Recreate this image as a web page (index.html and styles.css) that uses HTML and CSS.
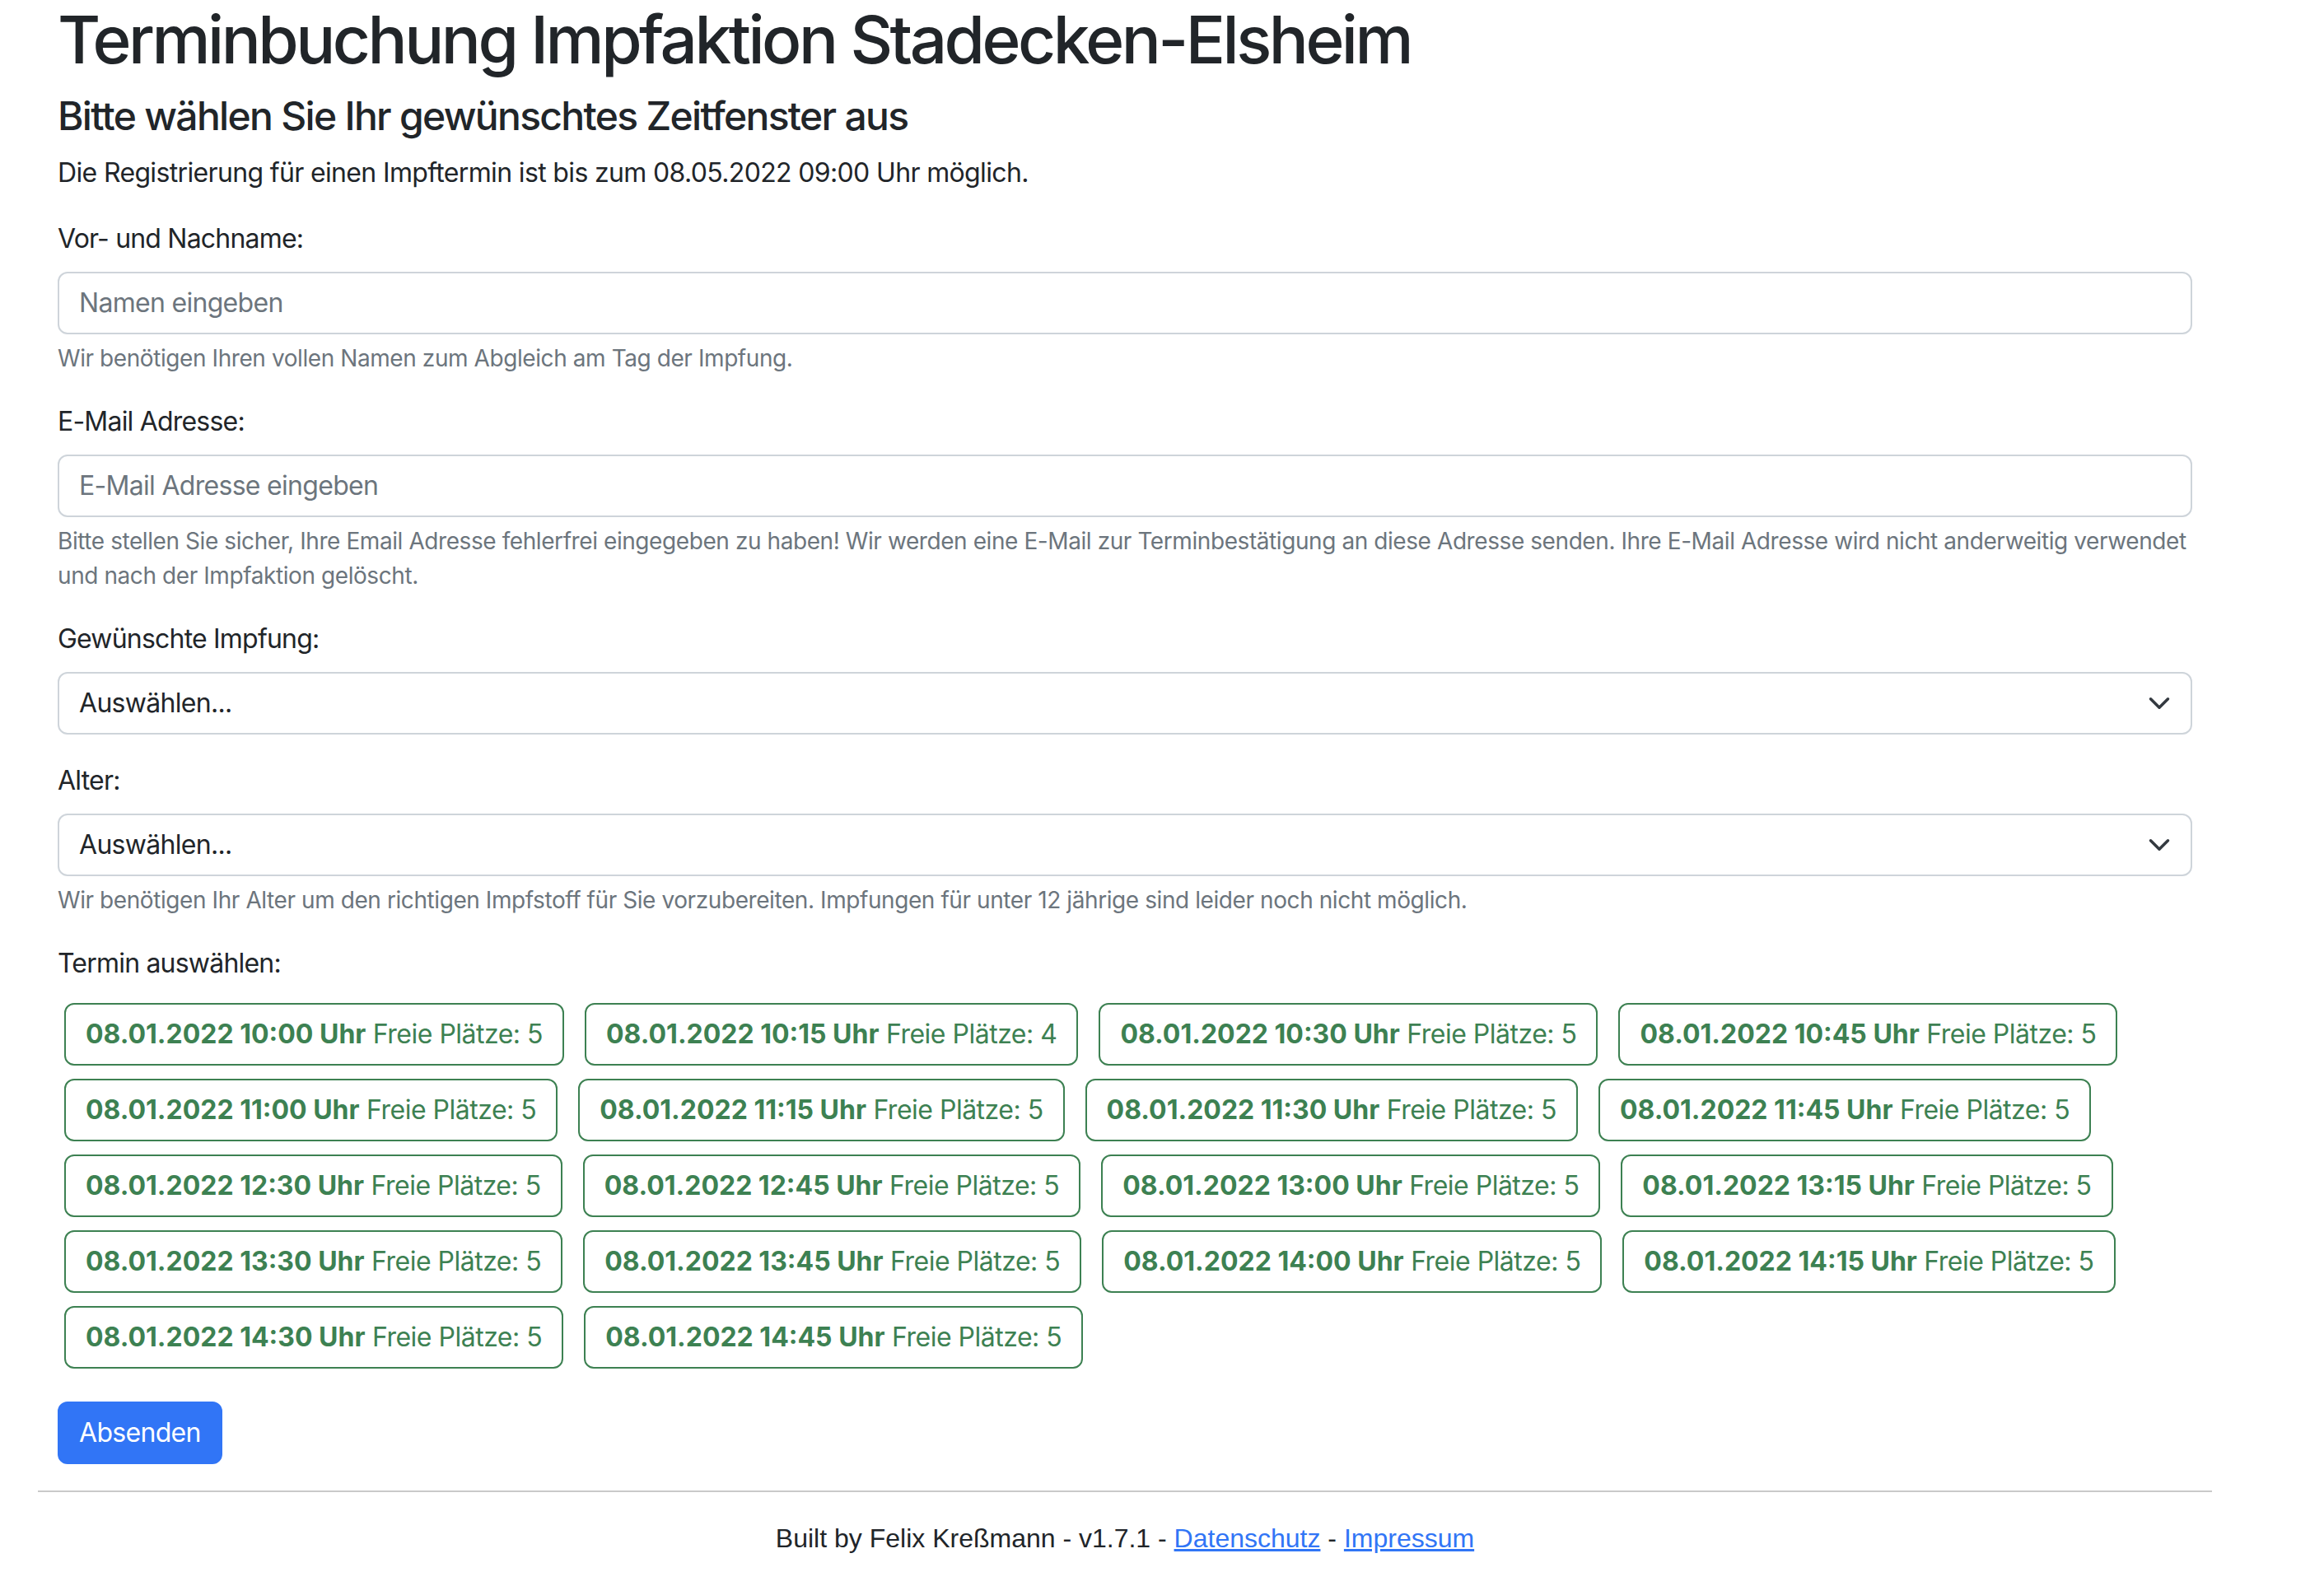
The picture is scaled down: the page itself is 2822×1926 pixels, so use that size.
FILE: index.html
```html
<!DOCTYPE html>
<html lang="de">
<head>
<meta charset="utf-8">
<title>Terminbuchung Impfaktion Stadecken-Elsheim</title>
<link rel="stylesheet" href="styles.css">
</head>
<body>
<div class="container">
  <form class="content">
    <h1 class="title">Terminbuchung Impfaktion Stadecken-Elsheim</h1>
    <h4 class="subtitle">Bitte wählen Sie Ihr gewünschtes Zeitfenster aus</h4>
    <p class="lead-text">Die Registrierung für einen Impftermin ist bis zum 08.05.2022 09:00 Uhr möglich.</p>

    <div class="field">
      <label class="form-label">Vor- und Nachname:</label>
      <input class="form-control" type="text" placeholder="Namen eingeben">
      <div class="form-text">Wir benötigen Ihren vollen Namen zum Abgleich am Tag der Impfung.</div>
    </div>

    <div class="field">
      <label class="form-label">E-Mail Adresse:</label>
      <input class="form-control" type="email" placeholder="E-Mail Adresse eingeben">
      <div class="form-text">Bitte stellen Sie sicher, Ihre Email Adresse fehlerfrei eingegeben zu haben! Wir werden eine E-Mail zur Terminbestätigung an diese Adresse senden. Ihre E-Mail Adresse wird nicht anderweitig verwendet und nach der Impfaktion gelöscht.</div>
    </div>

    <div class="field">
      <label class="form-label">Gewünschte Impfung:</label>
      <div class="form-select"><span>Auswählen...</span><svg class="chev" viewBox="0 0 16 16" width="28" height="28"><path d="m2 5 6 6 6-6" fill="none" stroke="#343a40" stroke-width="2" stroke-linecap="round" stroke-linejoin="round"/></svg></div>
    </div>

    <div class="field">
      <label class="form-label">Alter:</label>
      <div class="form-select"><span>Auswählen...</span><svg class="chev" viewBox="0 0 16 16" width="28" height="28"><path d="m2 5 6 6 6-6" fill="none" stroke="#343a40" stroke-width="2" stroke-linecap="round" stroke-linejoin="round"/></svg></div>
      <div class="form-text">Wir benötigen Ihr Alter um den richtigen Impfstoff für Sie vorzubereiten. Impfungen für unter 12 jährige sind leider noch nicht möglich.</div>
    </div>

    <label class="form-label">Termin auswählen:</label>
    <div class="slots">
      <button type="button" class="slot"><b>08.01.2022 10:00 Uhr</b> Freie Plätze: 5</button>
      <button type="button" class="slot"><b>08.01.2022 10:15 Uhr</b> Freie Plätze: 4</button>
      <button type="button" class="slot"><b>08.01.2022 10:30 Uhr</b> Freie Plätze: 5</button>
      <button type="button" class="slot"><b>08.01.2022 10:45 Uhr</b> Freie Plätze: 5</button>
      <button type="button" class="slot"><b>08.01.2022 11:00 Uhr</b> Freie Plätze: 5</button>
      <button type="button" class="slot"><b>08.01.2022 11:15 Uhr</b> Freie Plätze: 5</button>
      <button type="button" class="slot"><b>08.01.2022 11:30 Uhr</b> Freie Plätze: 5</button>
      <button type="button" class="slot"><b>08.01.2022 11:45 Uhr</b> Freie Plätze: 5</button>
      <button type="button" class="slot"><b>08.01.2022 12:30 Uhr</b> Freie Plätze: 5</button>
      <button type="button" class="slot"><b>08.01.2022 12:45 Uhr</b> Freie Plätze: 5</button>
      <button type="button" class="slot"><b>08.01.2022 13:00 Uhr</b> Freie Plätze: 5</button>
      <button type="button" class="slot"><b>08.01.2022 13:15 Uhr</b> Freie Plätze: 5</button>
      <button type="button" class="slot"><b>08.01.2022 13:30 Uhr</b> Freie Plätze: 5</button>
      <button type="button" class="slot"><b>08.01.2022 13:45 Uhr</b> Freie Plätze: 5</button>
      <button type="button" class="slot"><b>08.01.2022 14:00 Uhr</b> Freie Plätze: 5</button>
      <button type="button" class="slot"><b>08.01.2022 14:15 Uhr</b> Freie Plätze: 5</button>
      <button type="button" class="slot"><b>08.01.2022 14:30 Uhr</b> Freie Plätze: 5</button>
      <button type="button" class="slot"><b>08.01.2022 14:45 Uhr</b> Freie Plätze: 5</button>
    </div>

    <button type="submit" class="btn-primary">Absenden</button>
  </form>
  <hr class="divider">
  <footer class="footer">Built by Felix Kreßmann - v1.7.1 - <a href="#">Datenschutz</a> - <a href="#">Impressum</a></footer>
</div>
</body>
</html>
```

FILE: styles.css
```css
html, body {
  margin: 0;
  padding: 0;
  background: #ffffff;
}
body {
  font-family: Inter, "Noto Sans", "Liberation Sans", sans-serif;
  font-size: 32px;
  line-height: 1.5;
  color: #212529;
  letter-spacing: -0.7px;
}
.container {
  margin-left: 46px;
  width: 2640px;
}
.content {
  padding: 0 24px;
}
.title {
  font-size: 80px;
  font-weight: 500;
  line-height: 1.2;
  letter-spacing: -3.5px;
  margin: 0 0 16px 0;
}
.subtitle {
  font-size: 48px;
  font-weight: 500;
  line-height: 1.2;
  letter-spacing: -1.7px;
  margin: 0 0 16px 0;
}
.lead-text {
  margin: 0 0 32px 0;
  letter-spacing: -0.65px;
}
.field {
  margin-bottom: 32px;
}
.form-label {
  display: block;
  margin-bottom: 16px;
  letter-spacing: -0.8px;
}
.form-control {
  display: block;
  box-sizing: border-box;
  width: 100%;
  height: 76px;
  padding: 12px 24px;
  font-family: inherit;
  font-size: 32px;
  line-height: 48px;
  letter-spacing: -0.7px;
  color: #212529;
  background: #fff;
  border: 2px solid #ced4da;
  border-radius: 12px;
  outline: none;
}
.form-control::placeholder {
  color: #6c757d;
  opacity: 1;
}
.form-select {
  display: flex;
  align-items: center;
  justify-content: space-between;
  box-sizing: border-box;
  height: 76px;
  padding: 12px 24px;
  border: 2px solid #ced4da;
  border-radius: 12px;
  background: #fff;
}
.chev {
  display: block;
}
.form-text {
  margin-top: 8px;
  font-size: 28px;
  line-height: 1.5;
  letter-spacing: -0.42px;
  color: #6c757d;
}
.slots {
  margin-bottom: 32px;
  letter-spacing: 0;
}
.slot {
  display: inline-block;
  margin: 8px;
  height: 76px;
  padding: 12px 24px;
  font-family: inherit;
  font-size: 32px;
  line-height: 48px;
  letter-spacing: -0.5px;
  color: #3d8152;
  background: #fff;
  border: 2px solid #3d8152;
  border-radius: 12px;
  vertical-align: middle;
}
.slot b {
  font-weight: 700;
  letter-spacing: 0;
}
.btn-primary {
  display: inline-block;
  height: 76px;
  padding: 12px 24px;
  font-family: inherit;
  font-size: 32px;
  line-height: 48px;
  letter-spacing: -0.7px;
  color: #fff;
  background: #3175f6;
  border: 2px solid #3175f6;
  border-radius: 12px;
}
.divider {
  margin: 32px 0;
  border: 0;
  border-top: 2px solid #c9c9c9;
  height: 0;
}
.footer {
  text-align: center;
  font-family: "Liberation Sans", Arial, sans-serif;
  font-size: 32px;
  line-height: 48px;
  letter-spacing: 0;
  color: #212529;
}
.footer a {
  color: #3175f6;
  text-decoration: underline;
}
```
